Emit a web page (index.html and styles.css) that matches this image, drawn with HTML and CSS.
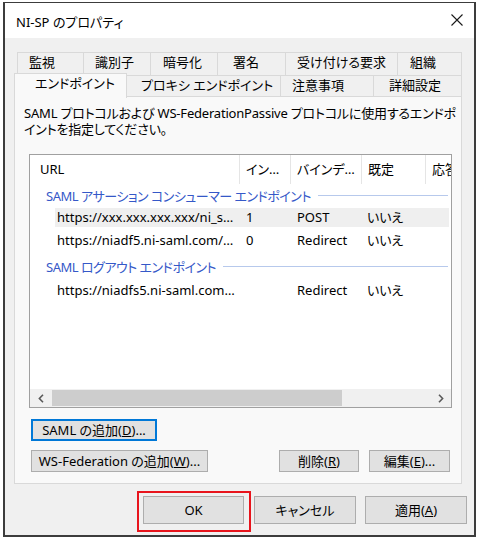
FILE: index.html
```html
<!DOCTYPE html>
<html lang="ja">
<head>
<meta charset="utf-8">
<title>NI-SP のプロパティ</title>
<link rel="stylesheet" href="styles.css">
</head>
<body>
<div class="window">
  <div class="titlebar">
    <span class="title">NI-SP のプロパティ</span>
    <svg class="close" width="12" height="12" viewBox="0 0 12 12"><path d="M0.5 0.5L11.5 11.5M11.5 0.5L0.5 11.5" stroke="#1a1a1a" stroke-width="1.1" fill="none"/></svg>
  </div>
  <div class="client">
    <div class="tabs">
      <div class="tabrow back">
        <div class="tab">監視</div>
        <div class="tab">識別子</div>
        <div class="tab">暗号化</div>
        <div class="tab">署名</div>
        <div class="tab">受け付ける要求</div>
        <div class="tab">組織</div>
      </div>
      <div class="tabrow front">
        <div class="tab selected">エンドポイント</div>
        <div class="tab">プロキシ エンドポイント</div>
        <div class="tab">注意事項</div>
        <div class="tab">詳細設定</div>
      </div>
    </div>
    <div class="panel">
      <div class="desc">
        <div class="dline">SAML プロトコルおよび WS-FederationPassive プロトコルに使用するエンドポ</div>
        <div class="dline">イントを指定してください。</div>
      </div>
      <div class="list">
        <div class="list-body">
          <div class="lv-header">
            <div class="col">URL</div>
            <div class="col">イン…</div>
            <div class="col">バインデ…</div>
            <div class="col">既定</div>
            <div class="col">応答 URL</div>
          </div>
          <div class="group">SAML アサーション コンシューマー エンドポイント</div>
          <div class="row first hl"><span>https://xxx.xxx.xxx.xxx/ni_s…</span><span>1</span><span>POST</span><span>いいえ</span></div>
          <div class="row"><span>https://niadf5.ni-saml.com/…</span><span>0</span><span>Redirect</span><span>いいえ</span></div>
          <div class="group second">SAML ログアウト エンドポイント</div>
          <div class="row first2"><span>https://niadfs5.ni-saml.com…</span><span></span><span>Redirect</span><span>いいえ</span></div>
        </div>
        <div class="hscroll">
          <div class="arrow"><svg width="6" height="9" viewBox="0 0 6 9"><path d="M5 0.8L1.4 4.5L5 8.2" stroke="#5a5a5a" stroke-width="1.6" fill="none"/></svg></div>
          <div class="thumb"></div>
          <div class="arrow end"><svg width="6" height="9" viewBox="0 0 6 9"><path d="M1 0.8L4.6 4.5L1 8.2" stroke="#5a5a5a" stroke-width="1.6" fill="none"/></svg></div>
        </div>
      </div>
      <div class="btnline">
        <button class="btn focused saml">SAML の追加(<u>D</u>)...</button>
      </div>
      <div class="btnline split">
        <button class="btn wsfed">WS-Federation の追加(<u>W</u>)...</button>
        <div class="btngroup">
          <button class="btn del">削除(<u>R</u>)</button>
          <button class="btn edit">編集(<u>E</u>)...</button>
        </div>
      </div>
    </div>
    <div class="footer">
      <span class="annot"><button class="btn big ok">OK</button></span>
      <button class="btn big cancel">キャンセル</button>
      <button class="btn big apply">適用(<u>A</u>)</button>
    </div>
  </div>
</div>
</body>
</html>
```
FILE: styles.css
```css
html, body {
  margin: 0;
  padding: 0;
  background: #ffffff;
}
body {
  font-family: "Noto Sans", "Noto Sans CJK JP", sans-serif;
  font-size: 13px;
  color: #000;
  font-feature-settings: "palt";
}
.window {
  box-sizing: border-box;
  width: 473px;
  height: 535px;
  margin: 2px 0 0 3px;
  border: 2px solid #3c3c3c;
  border-top-width: 1px;
  display: flex;
  flex-direction: column;
  background: #f0f0f0;
}
.titlebar {
  flex: none;
  height: 35px;
  box-sizing: border-box;
  background: #fff;
  display: flex;
  align-items: center;
  justify-content: space-between;
  padding: 2px 11px 0 11px;
}
.title {
  line-height: 16px;
}
.close {
  display: block;
  margin-top: -3px;
}
.client {
  flex: 1;
  display: flex;
  flex-direction: column;
  padding: 14px 7px 0 9px;
}
.tabrow {
  display: flex;
}
.tabrow.back {
  height: 23px;
  margin-left: 3px;
}
.tabrow.front {
  height: 24px;
  margin-top: -2px;
}
.tab {
  box-sizing: border-box;
  border-top: 1px solid #d9d9d9;
  border-left: 1px solid #d9d9d9;
  white-space: nowrap;
  background: #f0f0f0;
}
.back .tab {
  height: 23px;
  line-height: 19px;
}
.back .tab:nth-child(1) { width: 66px; padding-left: 11px; }
.back .tab:nth-child(2) { width: 67px; padding-left: 11px; }
.back .tab:nth-child(3) { width: 67px; padding-left: 12px; }
.back .tab:nth-child(4) { width: 68px; padding-left: 15px; }
.back .tab:nth-child(5) { width: 112px; padding-left: 11px; }
.back .tab:nth-child(6) { width: 65px; padding-left: 12px; border-right: 1px solid #d9d9d9; }
.front .tab {
  border-left: none;
  border-right: 1px solid #d9d9d9;
  margin-top: 2px;
  height: 22px;
  line-height: 19px;
}
.front .tab.selected {
  border-left: 1px solid #d9d9d9;
  margin-top: 0;
  height: 25px;
  line-height: 19px;
  background: #f9f9f9;
  position: relative;
  z-index: 1;
  width: 113px;
  padding-left: 20px;
}
.front .tab:nth-child(2) { width: 154px; padding-left: 14px; }
.front .tab:nth-child(3) { width: 93px; padding-left: 11px; }
.front .tab:nth-child(4) { width: 88px; padding-left: 15px; }

.panel {
  box-sizing: border-box;
  width: 448px;
  height: 388px;
  border: 1px solid #d9d9d9;
  background: #f9f9f9;
  margin-top: -1px;
}
.desc {
  padding: 9px 0 0 9px;
  height: 32px;
  display: flex;
  flex-direction: column;
  gap: 1px;
}
.dline {
  line-height: 15px;
  height: 15px;
  white-space: nowrap;
  letter-spacing: -0.2px;
}
.list {
  box-sizing: border-box;
  margin: 16px 0 0 14px;
  width: 423px;
  height: 254px;
  border: 1px solid #a0a0a0;
  background: #fff;
  display: flex;
  flex-direction: column;
  overflow: hidden;
}
.list-body {
  flex: 1;
  overflow: hidden;
}
.lv-header {
  display: grid;
  grid-template-columns: 210px 51px 71px 64px 1fr;
  height: 29px;
}
.lv-header .col {
  box-sizing: border-box;
  border-right: 1px solid #e5e5e5;
  padding-left: 6px;
  line-height: 29px;
  white-space: nowrap;
  overflow: hidden;
}
.lv-header .col:first-child { padding-left: 10px; }
.lv-header .col:last-child { border-right: none; }
.group {
  height: 23px;
  display: flex;
  align-items: center;
  padding-left: 16px;
  margin-right: 3px;
  color: #3558c8;
  white-space: nowrap;
  letter-spacing: -0.5px;
}
.group::after {
  content: "";
  flex: 1;
  height: 1px;
  background: #b7c9ec;
  margin-left: 7px;
}
.group.second { margin-top: 5px; }
.row {
  display: grid;
  grid-template-columns: 185px 51px 71px 64px;
  margin-left: 25px;
  width: 394px;
  height: 19px;
  line-height: 19px;
  margin-top: 4px;
}
.row.first { margin-top: 1px; }
.row.first2 { margin-top: 3px; }
.row.hl { background: #efefef; }
.row span {
  padding-left: 6px;
  white-space: nowrap;
  overflow: hidden;
}
.row span:first-child { padding-left: 2px; }
.row span:nth-child(4) { padding-left: 5px; }
.hscroll {
  flex: none;
  height: 18px;
  background: #f0f0f0;
  display: flex;
}
.arrow {
  width: 21px;
  display: flex;
  align-items: center;
  justify-content: center;
}
.arrow svg { display: block; }
.arrow.end { margin-left: auto; }
.thumb {
  margin: 1px 0 1px 1px;
  width: 290px;
  background: #cdcdcd;
}
.btn {
  box-sizing: border-box;
  font-family: inherit;
  font-size: 13px;
  font-feature-settings: "palt";
  color: #000;
  background: #e1e1e1;
  border: 1px solid #adadad;
  height: 22px;
  padding: 0;
  margin: 0;
  line-height: 18px;
  white-space: nowrap;
}
.btn u { text-underline-offset: 1px; }
.btn.focused {
  border-color: #0078d7;
  box-shadow: inset 0 0 0 1px #0078d7;
}
.btnline {
  margin: 11px 0 0 16px;
  display: flex;
}
.btnline.split {
  margin: 9px 11px 0 16px;
  justify-content: space-between;
}
.btngroup {
  display: flex;
  gap: 10px;
}
.saml { width: 126px; }
.wsfed { width: 177px; }
.del { width: 80px; }
.edit { width: 81px; }
.footer {
  display: flex;
  justify-content: flex-end;
  align-items: center;
  margin-top: 12px;
}
.btn.big { height: 28px; }
.ok { width: 101px; }
.cancel { width: 102px; margin-left: 10px; }
.apply { width: 102px; margin-left: 9px; }
.annot {
  position: relative;
  display: flex;
}
.annot::after {
  content: "";
  position: absolute;
  left: -6px;
  top: -5px;
  width: 114px;
  height: 41px;
  box-sizing: border-box;
  border: 2px solid #e8141c;
  pointer-events: none;
}
```
